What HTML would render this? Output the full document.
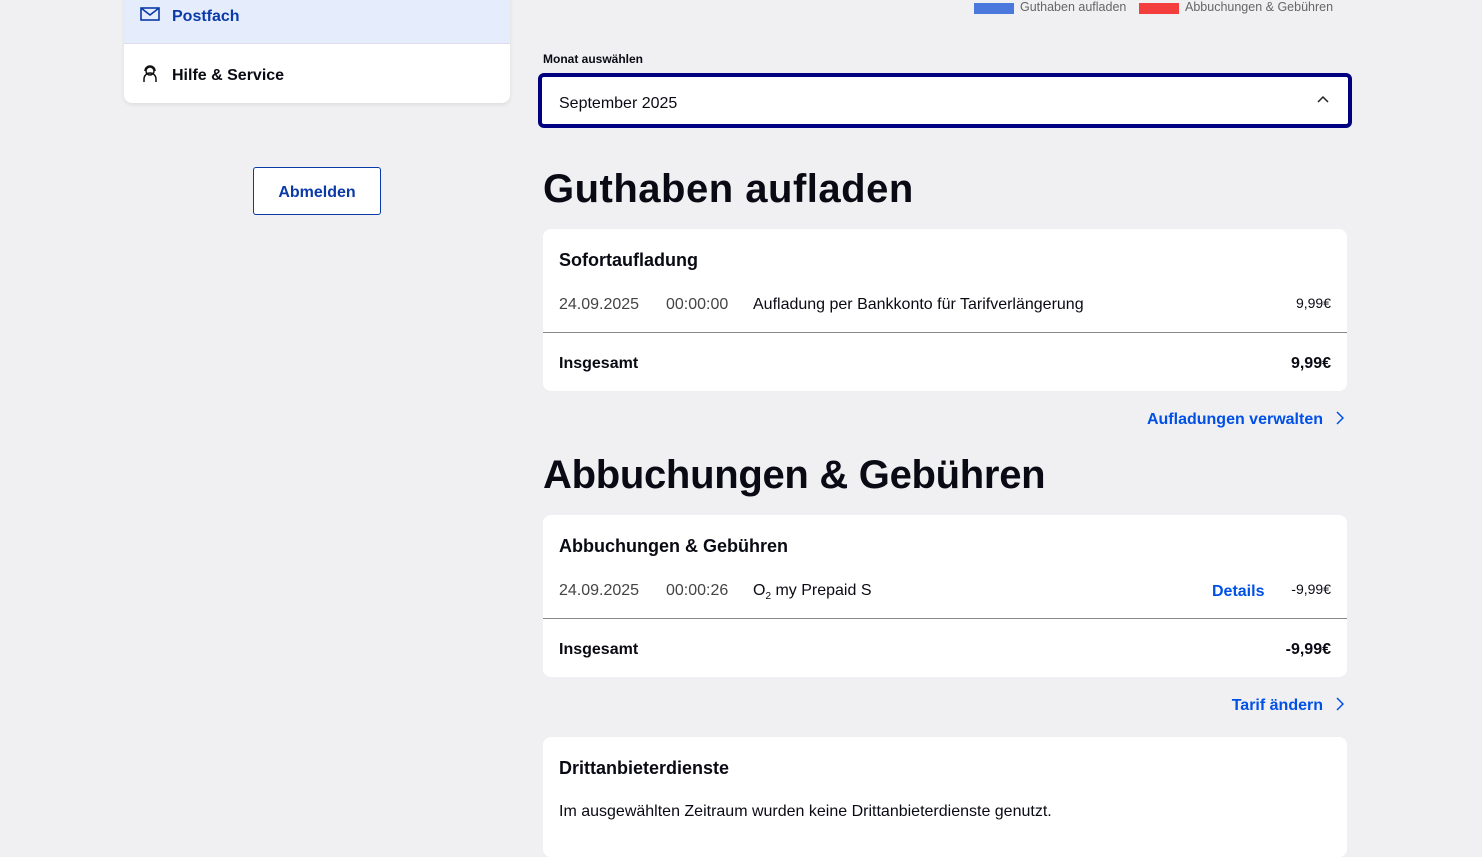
<!DOCTYPE html>
<html><head><meta charset="utf-8"><style>
*{box-sizing:border-box;margin:0;padding:0}
body{width:1482px;height:834px;overflow:hidden;background:#f0f0f3;font-family:"Liberation Sans",sans-serif;color:#0a0a14;position:relative}
.abs{position:absolute}
.card{position:absolute;background:#fff;border-radius:8px}
.b{font-weight:bold}
.blue{color:#0050e6}
.t{position:absolute;white-space:nowrap}
.g{color:#444}
</style></head><body>
<div class="card" style="left:124px;top:-10px;width:386px;height:113px;box-shadow:0 2px 4px rgba(0,0,0,.08);overflow:hidden">
 <div class="abs" style="left:0;top:0;width:386px;height:54px;background:#e5edfc;border-bottom:1px solid #dde"></div>
 <svg class="abs" style="left:16px;top:16px" width="20" height="16" viewBox="0 0 20 16"><rect x="1" y="2" width="18" height="12" fill="none" stroke="#0a3aa8" stroke-width="1.6"/><path d="M1 2l9 7 9-7" fill="none" stroke="#0a3aa8" stroke-width="1.6"/></svg>
 <div class="t b" style="left:48px;top:18px;font-size:16px;color:#0a3aa8">Postfach</div>
 <svg class="abs" style="left:18px;top:75px" width="16" height="18" viewBox="0 0 16 18"><circle cx="8" cy="6" r="4" fill="none" stroke="#111" stroke-width="1.5"/><path d="M2 17v-3a6 6 0 0 1 12 0v3M3 6a5 5 0 0 1 10 0" fill="none" stroke="#111" stroke-width="1.5"/></svg>
 <div class="t b" style="left:48px;top:77px;font-size:16px">Hilfe &amp; Service</div>
</div>
<div class="abs" style="left:253px;top:167px;width:128px;height:48px;border:1px solid #0a3aa8;border-radius:3px;background:#fff"></div>
<div class="t b blue" style="left:253px;top:184px;width:128px;text-align:center;font-size:16px;color:#0a3aa8">Abmelden</div>

<div class="abs" style="left:974px;top:3px;width:40px;height:11px;background:#4a78dc"></div>
<div class="t" style="left:1020px;top:0px;font-size:12.5px;color:#666">Guthaben aufladen</div>
<div class="abs" style="left:1139px;top:3px;width:40px;height:11px;background:#f43d3d"></div>
<div class="t" style="left:1185px;top:0px;font-size:12.5px;color:#666">Abbuchungen &amp; Gebühren</div>

<div class="t b" style="left:543px;top:52px;font-size:12px">Monat auswählen</div>
<div class="abs" style="left:538px;top:73px;width:814px;height:55px;border:4px solid #000080;border-radius:6px;background:#fff"></div>
<div class="t" style="left:559px;top:95px;font-size:16px">September 2025</div>
<svg class="abs" style="left:1316px;top:94px" width="14" height="10" viewBox="0 0 14 10"><path d="M2 8l5-5 5 5" fill="none" stroke="#222" stroke-width="1.5"/></svg>

<div class="t b" style="left:543px;top:167px;font-size:40px;letter-spacing:0.5px">Guthaben aufladen</div>
<div class="card" style="left:543px;top:229px;width:804px;height:162px">
 <div class="t b" style="left:16px;top:21px;font-size:18px">Sofortaufladung</div>
 <div class="t g" style="left:16px;top:67px;font-size:16px">24.09.2025</div>
 <div class="t g" style="left:123px;top:67px;font-size:16px">00:00:00</div>
 <div class="t" style="left:210px;top:67px;font-size:16px">Aufladung per Bankkonto für Tarifverlängerung</div>
 <div class="t" style="right:16px;top:66px;font-size:14px">9,99€</div>
 <div class="abs" style="left:0;top:103px;width:804px;height:1px;background:#888"></div>
 <div class="t b" style="left:16px;top:126px;font-size:16px">Insgesamt</div>
 <div class="t b" style="right:16px;top:126px;font-size:16px">9,99€</div>
</div>
<div class="t b blue" style="right:159px;top:411px;font-size:16px">Aufladungen verwalten</div>
<svg class="abs" style="left:1336px;top:411px" width="8" height="14" viewBox="0 0 8 14"><path d="M1 1l6 6-6 6" fill="none" stroke="#0050e6" stroke-width="1.5"/></svg>

<div class="t b" style="left:543px;top:453px;font-size:40px;letter-spacing:-0.3px">Abbuchungen &amp; Gebühren</div>
<div class="card" style="left:543px;top:515px;width:804px;height:162px">
 <div class="t b" style="left:16px;top:21px;font-size:18px">Abbuchungen &amp; Gebühren</div>
 <div class="t g" style="left:16px;top:67px;font-size:16px">24.09.2025</div>
 <div class="t g" style="left:123px;top:67px;font-size:16px">00:00:26</div>
 <div class="t" style="left:210px;top:67px;font-size:16px">O<sub style="font-size:10px">2</sub> my Prepaid S</div>
 <div class="t b blue" style="left:669px;top:68px;font-size:16px">Details</div>
 <div class="t" style="right:16px;top:66px;font-size:14px">-9,99€</div>
 <div class="abs" style="left:0;top:103px;width:804px;height:1px;background:#888"></div>
 <div class="t b" style="left:16px;top:126px;font-size:16px">Insgesamt</div>
 <div class="t b" style="right:16px;top:126px;font-size:16px">-9,99€</div>
</div>
<div class="t b blue" style="right:159px;top:697px;font-size:16px">Tarif ändern</div>
<svg class="abs" style="left:1336px;top:697px" width="8" height="14" viewBox="0 0 8 14"><path d="M1 1l6 6-6 6" fill="none" stroke="#0050e6" stroke-width="1.5"/></svg>

<div class="card" style="left:543px;top:737px;width:804px;height:120px">
 <div class="t b" style="left:16px;top:21px;font-size:18px">Drittanbieterdienste</div>
 <div class="t" style="left:16px;top:66px;font-size:16px">Im ausgewählten Zeitraum wurden keine Drittanbieterdienste genutzt.</div>
</div>
</body></html>
